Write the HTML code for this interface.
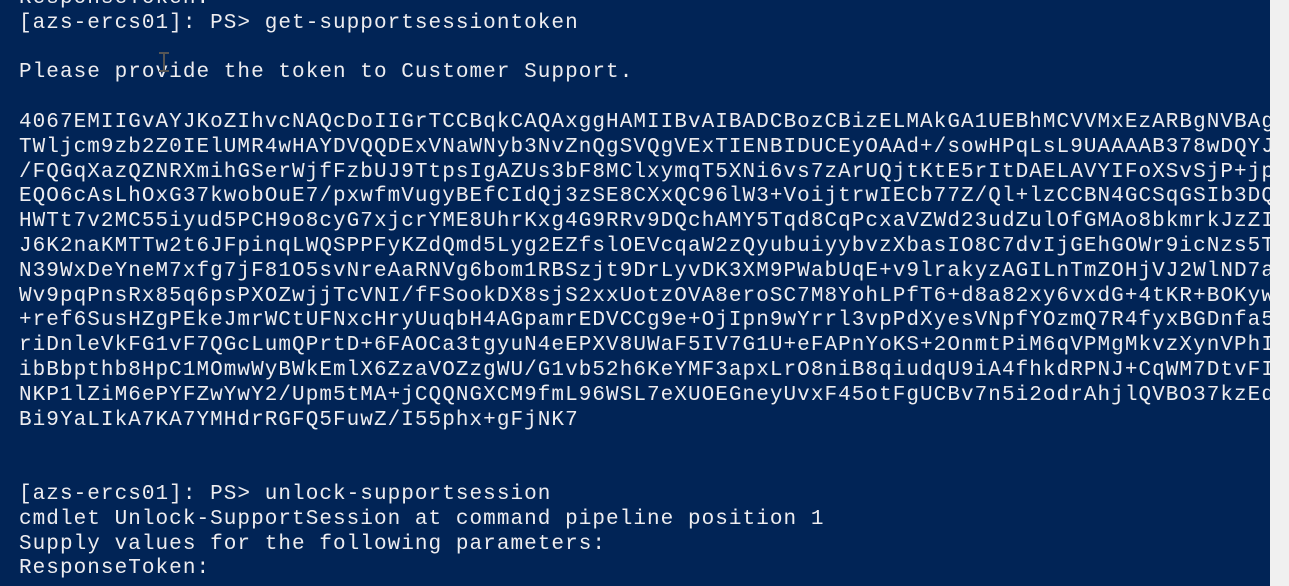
<!DOCTYPE html>
<html><head><meta charset="utf-8"><style>
html,body{margin:0;padding:0;width:1289px;height:586px;overflow:hidden;background:#012456;}
.term{position:absolute;left:0;top:0;width:1270px;height:586px;overflow:hidden;background:#012456;}
pre{position:absolute;left:19px;top:-13px;margin:0;font-family:"Liberation Mono",monospace;font-size:21px;line-height:24.8px;letter-spacing:1.05px;color:#eeedf0;white-space:pre;}
.sb{position:absolute;left:1270px;top:0;width:19px;height:586px;background:#f0f0f0;}
.ibeam{position:absolute;left:163px;top:52px;width:2px;height:20px;background:#555;}
.ibeam:before,.ibeam:after{content:"";position:absolute;left:-4px;width:10px;height:2px;background:#555;}
.ibeam:before{top:0}.ibeam:after{bottom:0}
</style></head><body>
<div class="term">
<pre>ResponseToken:
[azs-ercs01]: PS&gt; get-supportsessiontoken

Please provide the token to Customer Support.

4067EMIIGvAYJKoZIhvcNAQcDoIIGrTCCBqkCAQAxggHAMIIBvAIBADCBozCBizELMAkGA1UEBhMCVVMxEzARBgNVBAgT
TWljcm9zb2Z0IElUMR4wHAYDVQQDExVNaWNyb3NvZnQgSVQgVExTIENBIDUCEyOAAd+/sowHPqLsL9UAAAAB378wDQYJKo
/FQGqXazQZNRXmihGSerWjfFzbUJ9TtpsIgAZUs3bF8MClxymqT5XNi6vs7zArUQjtKtE5rItDAELAVYIFoXSvSjP+jpQ
EQO6cAsLhOxG37kwobOuE7/pxwfmVugyBEfCIdQj3zSE8CXxQC96lW3+VoijtrwIECb77Z/Ql+lzCCBN4GCSqGSIb3DQE
HWTt7v2MC55iyud5PCH9o8cyG7xjcrYME8UhrKxg4G9RRv9DQchAMY5Tqd8CqPcxaVZWd23udZulOfGMAo8bkmrkJzZIk
J6K2naKMTTw2t6JFpinqLWQSPPFyKZdQmd5Lyg2EZfslOEVcqaW2zQyubuiyybvzXbasIO8C7dvIjGEhGOWr9icNzs5Tq
N39WxDeYneM7xfg7jF81O5svNreAaRNVg6bom1RBSzjt9DrLyvDK3XM9PWabUqE+v9lrakyzAGILnTmZOHjVJ2WlND7a
Wv9pqPnsRx85q6psPXOZwjjTcVNI/fFSookDX8sjS2xxUotzOVA8eroSC7M8YohLPfT6+d8a82xy6vxdG+4tKR+BOKyw
+ref6SusHZgPEkeJmrWCtUFNxcHryUuqbH4AGpamrEDVCCg9e+OjIpn9wYrrl3vpPdXyesVNpfYOzmQ7R4fyxBGDnfa5
riDnleVkFG1vF7QGcLumQPrtD+6FAOCa3tgyuN4eEPXV8UWaF5IV7G1U+eFAPnYoKS+2OnmtPiM6qVPMgMkvzXynVPhI
ibBbpthb8HpC1MOmwWyBWkEmlX6ZzaVOZzgWU/G1vb52h6KeYMF3apxLrO8niB8qiudqU9iA4fhkdRPNJ+CqWM7DtvFI
NKP1lZiM6ePYFZwYwY2/Upm5tMA+jCQQNGXCM9fmL96WSL7eXUOEGneyUvxF45otFgUCBv7n5i2odrAhjlQVBO37kzEd
Bi9YaLIkA7KA7YMHdrRGFQ5FuwZ/I55phx+gFjNK7


[azs-ercs01]: PS&gt; unlock-supportsession
cmdlet Unlock-SupportSession at command pipeline position 1
Supply values for the following parameters:
ResponseToken:</pre>
<div class="ibeam"></div>
</div>
<div class="sb"></div>
</body></html>
